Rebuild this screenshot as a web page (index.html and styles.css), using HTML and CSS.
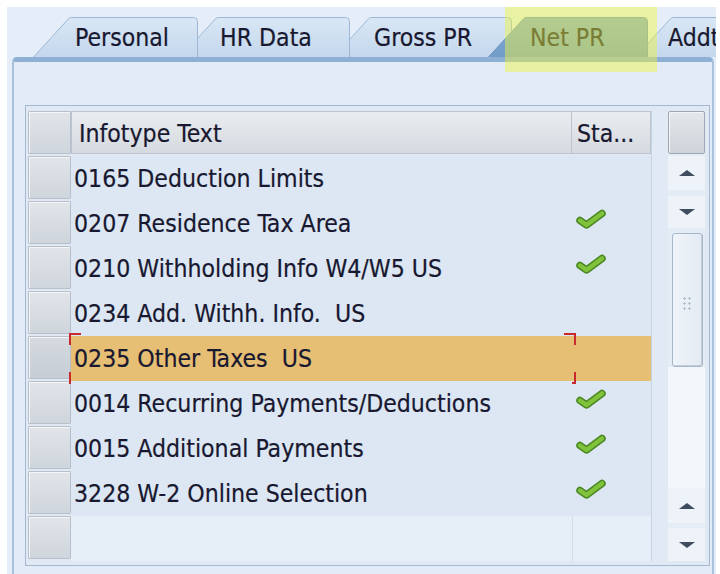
FILE: index.html
```html
<!DOCTYPE html>
<html lang="en">
<head>
<meta charset="utf-8">
<title>Infotypes</title>
<link rel="stylesheet" href="styles.css">
</head>
<body>
<div class="frame">
  <div class="tabs">
    <div class="tab t-personal">
      <svg class="tab-bg" viewBox="0 0 165 40" width="165" height="40"><defs><linearGradient id="g1" x1="0" y1="0" x2="0" y2="1"><stop offset="0" stop-color="#d9e7f5"/><stop offset="1" stop-color="#c4d7ec"/></linearGradient></defs><path d="M0.5 40 L35.5 1.8 Q36.6 0.5 38.5 0.5 L160.5 0.5 Q164.5 0.5 164.5 4.5 L164.5 40" fill="url(#g1)" stroke="#9cb7d6"/></svg>
      <span class="tab-label">Personal</span>
    </div>
    <div class="tab t-hr">
      <svg class="tab-bg" viewBox="0 0 170 40" width="170" height="40"><path d="M0.5 40 L35.5 1.8 Q36.6 0.5 38.5 0.5 L165.5 0.5 Q169.5 0.5 169.5 4.5 L169.5 40" fill="url(#g1)" stroke="#9cb7d6"/></svg>
      <span class="tab-label">HR Data</span>
    </div>
    <div class="tab t-gross">
      <svg class="tab-bg" viewBox="0 0 179 40" width="179" height="40"><path d="M0.5 40 L35.5 1.8 Q36.6 0.5 38.5 0.5 L174.5 0.5 Q178.5 0.5 178.5 4.5 L178.5 40" fill="url(#g1)" stroke="#9cb7d6"/></svg>
      <span class="tab-label">Gross PR</span>
    </div>
    <div class="tab t-net">
      <svg class="tab-bg" viewBox="0 0 160 40" width="160" height="40"><defs><linearGradient id="g2" x1="0" y1="0" x2="0" y2="1"><stop offset="0" stop-color="#84aad3"/><stop offset="1" stop-color="#729cc9"/></linearGradient></defs><path d="M0.5 40 L35.5 1.8 Q36.6 0.5 38.5 0.5 L155.5 0.5 Q159.5 0.5 159.5 4.5 L159.5 40" fill="url(#g2)" stroke="#6f95c2"/></svg>
      <span class="tab-label">Net PR</span>
    </div>
    <div class="tab t-add">
      <svg class="tab-bg" viewBox="0 0 150 40" width="150" height="40"><path d="M0.5 40 L35.5 1.8 Q36.6 0.5 38.5 0.5 L145.5 0.5 Q149.5 0.5 149.5 4.5 L149.5 40" fill="url(#g1)" stroke="#9cb7d6"/></svg>
      <span class="tab-label">Addtl</span>
    </div>
  </div>

  <div class="panel">
    <div class="table">
      <div class="grid">
        <div class="rh"></div>
        <div class="th">Infotype Text</div>
        <div class="th th-st">Sta...</div>

        <div class="rh"></div>
        <div class="cell">0165 Deduction Limits</div>
        <div class="st"></div>

        <div class="rh"></div>
        <div class="cell">0207 Residence Tax Area</div>
        <div class="st"><svg class="check" viewBox="0 0 30 20" width="30" height="20"><path d="M4 11.5 L10.5 16 L26 4.5" fill="none" stroke="#4a8824" stroke-width="7.5" stroke-linecap="round" stroke-linejoin="round"/><path d="M4 11.5 L10.5 16 L26 4.5" fill="none" stroke="#80c23c" stroke-width="4.5" stroke-linecap="round" stroke-linejoin="round"/></svg></div>

        <div class="rh"></div>
        <div class="cell">0210 Withholding Info W4/W5 US</div>
        <div class="st"><svg class="check" viewBox="0 0 30 20" width="30" height="20"><path d="M4 11.5 L10.5 16 L26 4.5" fill="none" stroke="#4a8824" stroke-width="7.5" stroke-linecap="round" stroke-linejoin="round"/><path d="M4 11.5 L10.5 16 L26 4.5" fill="none" stroke="#80c23c" stroke-width="4.5" stroke-linecap="round" stroke-linejoin="round"/></svg></div>

        <div class="rh"></div>
        <div class="cell">0234 Add. Withh. Info.&nbsp; US</div>
        <div class="st"></div>

        <div class="rh rh-sel"></div>
        <div class="cell sel">0235 Other Taxes&nbsp; US<span class="focus"><i class="c tl"></i><i class="c tr"></i><i class="c bl"></i><i class="c br"></i></span></div>
        <div class="st sel"></div>

        <div class="rh"></div>
        <div class="cell">0014 Recurring Payments/Deductions</div>
        <div class="st"><svg class="check" viewBox="0 0 30 20" width="30" height="20"><path d="M4 11.5 L10.5 16 L26 4.5" fill="none" stroke="#4a8824" stroke-width="7.5" stroke-linecap="round" stroke-linejoin="round"/><path d="M4 11.5 L10.5 16 L26 4.5" fill="none" stroke="#80c23c" stroke-width="4.5" stroke-linecap="round" stroke-linejoin="round"/></svg></div>

        <div class="rh"></div>
        <div class="cell">0015 Additional Payments</div>
        <div class="st"><svg class="check" viewBox="0 0 30 20" width="30" height="20"><path d="M4 11.5 L10.5 16 L26 4.5" fill="none" stroke="#4a8824" stroke-width="7.5" stroke-linecap="round" stroke-linejoin="round"/><path d="M4 11.5 L10.5 16 L26 4.5" fill="none" stroke="#80c23c" stroke-width="4.5" stroke-linecap="round" stroke-linejoin="round"/></svg></div>

        <div class="rh"></div>
        <div class="cell">3228 W-2 Online Selection</div>
        <div class="st"><svg class="check" viewBox="0 0 30 20" width="30" height="20"><path d="M4 11.5 L10.5 16 L26 4.5" fill="none" stroke="#4a8824" stroke-width="7.5" stroke-linecap="round" stroke-linejoin="round"/><path d="M4 11.5 L10.5 16 L26 4.5" fill="none" stroke="#80c23c" stroke-width="4.5" stroke-linecap="round" stroke-linejoin="round"/></svg></div>

        <div class="rh"></div>
        <div class="cell empty"></div>
        <div class="st empty"></div>
      </div>

      <div class="gapcol"></div>

      <div class="scroll">
        <div class="sb-corner"></div>
        <div class="sb-btn sb-up1"><span class="arrow-up"></span></div>
        <div class="sb-btn sb-down1"><span class="arrow-down"></span></div>
        <div class="sb-thumb"><span class="grip"></span></div>
        <div class="sb-track"></div>
        <div class="sb-btn sb-up2"><span class="arrow-up"></span></div>
        <div class="sb-btn sb-down2"><span class="arrow-down"></span></div>
      </div>
    </div>
  </div>

  <div class="highlight"></div>
</div>
</body>
</html>
```

FILE: styles.css
```css
* {
  box-sizing: border-box;
}

body {
  margin: 0;
  background: #ffffff;
  font-family: "DejaVu Sans Condensed", "DejaVu Sans", sans-serif;
  font-stretch: condensed;
  font-size: 24.6px;
  color: #181830;
  -webkit-text-stroke: 0.2px #181830;
}

.frame {
  position: relative;
  margin: 7px 0 0 7px;
  width: 709px;
  height: 567px;
  background: #e5eef8;
  overflow: hidden;
}

/* ---------- tabs ---------- */
.tabs {
  display: flex;
  align-items: flex-end;
  height: 50px;
  padding-left: 26px;
  position: relative;
  z-index: 1;
}

.tab {
  position: relative;
  flex: none;
  height: 40px;
  padding: 2px 0 0 42px;
  line-height: 38px;
  white-space: nowrap;
  overflow: hidden;
}

.tab-bg {
  position: absolute;
  left: 0;
  top: 0;
}

.tab-label {
  position: relative;
}

.t-personal { width: 165px; z-index: 5; }
.t-hr { width: 170px; margin-left: -18px; z-index: 4; padding-left: 40px; }
.t-gross { width: 179px; margin-left: -17px; z-index: 3; padding-left: 41px; }
.t-net { width: 160px; margin-left: -24px; z-index: 6; }
.t-add { width: 150px; margin-left: -13px; z-index: 2; padding-left: 33px; }

.highlight {
  position: absolute;
  left: 498px;
  top: 0;
  width: 152px;
  height: 65px;
  background: rgba(238, 244, 60, 0.46);
  z-index: 10;
}

/* ---------- panel ---------- */
.panel {
  margin-left: 5px;
  width: 702px;
  height: 517px;
  border: 2px solid #a9c2de;
  border-top: 5px solid #8fb0d5;
  border-bottom: none;
  border-radius: 5px 5px 0 0;
  background: #e3ecf6;
  padding: 43px 0 0 11px;
}

.table {
  display: flex;
  width: 685px;
  height: 461px;
  border: 1px solid #a2b9d4;
  background: #dfe8f3;
  padding: 5px 4px 4px 2px;
}

.grid {
  display: grid;
  grid-template-columns: 43px 501px 79px;
  grid-auto-rows: 45px;
}

.rh {
  height: 43px;
  background: linear-gradient(#e1e5ea, #cfd5dc);
  border: 1px solid #b7c0ca;
  border-radius: 1px;
  box-shadow: inset 1px 1px 0 #f3f5f7;
}

.rh-sel {
  background: linear-gradient(#d5dae0, #c7cdd5);
}

.th {
  height: 43px;
  background: linear-gradient(#eaedf0, #d5dae0);
  border: 1px solid #bcc5cf;
  padding: 2px 0 0 7px;
  line-height: 39px;
  white-space: nowrap;
}

.th-st {
  border-left: none;
  padding-left: 5px;
}

.cell {
  position: relative;
  background: #dce7f3;
  padding: 1px 0 0 3px;
  line-height: 44px;
  white-space: nowrap;
}

.st {
  background: #dce7f3;
  display: flex;
  align-items: flex-start;
  padding: 8px 0 0 4px;
}

.sel {
  background: #e7bf74;
}

.empty {
  background: #e6eef7;
}

.st.empty {
  border-left: 1px solid #d3dde8;
}

.check {
  display: block;
}

.focus {
  position: absolute;
  left: -2px;
  right: -4px;
  top: -3px;
  bottom: -3px;
}

.c {
  position: absolute;
  width: 12px;
  height: 12px;
  border: 0 solid #c8292c;
}

.tl { left: 0; top: 0; border-left-width: 2px; border-top-width: 2px; }
.tr { right: 0; top: 0; border-right-width: 2px; border-top-width: 2px; }
.bl { left: 0; bottom: 0; border-left-width: 2px; border-bottom-width: 2px; }
.br { right: 0; bottom: 0; border-right-width: 2px; border-bottom-width: 2px; }

/* ---------- gap & scrollbar ---------- */
.gapcol {
  width: 17px;
  border-left: 1px solid #c5d3e3;
  background: #e0e9f4;
}

.scroll {
  width: 37px;
  display: flex;
  flex-direction: column;
  background: #e4ecf6;
}

.sb-corner {
  height: 43px;
  margin-bottom: 2px;
  background: linear-gradient(#e4e7eb, #cfd4da);
  border: 1px solid #9ea8b4;
  border-radius: 2px;
  box-shadow: inset 1px 1px 0 #f4f5f7;
}

.sb-btn {
  display: flex;
  align-items: center;
  justify-content: center;
  background: #eef3f9;
}

.sb-up1 { height: 34px; }
.sb-down1 { height: 32px; margin-top: 6px; }
.sb-up2 { height: 35px; }
.sb-down2 { height: 33px; margin-top: 5px; }

.arrow-up {
  width: 0;
  height: 0;
  border-left: 8px solid transparent;
  border-right: 8px solid transparent;
  border-bottom: 6px solid #3e4c5d;
}

.arrow-down {
  width: 0;
  height: 0;
  border-left: 8px solid transparent;
  border-right: 8px solid transparent;
  border-top: 6px solid #3e4c5d;
}

.sb-thumb {
  height: 134px;
  margin: 5px 2px 0 4px;
  background: linear-gradient(90deg, #eff4f9, #e3eaf3);
  border: 1px solid #a7b7c9;
  border-radius: 3px;
  box-shadow: inset -1px -1px 0 #c3cedb;
  display: flex;
  align-items: center;
  justify-content: center;
}

.grip {
  width: 9px;
  height: 13px;
  margin-top: 6px;
  background-image: radial-gradient(circle, #b5c0cd 1px, transparent 1.4px);
  background-size: 5px 5px;
  background-position: -1px -1px;
}

.sb-track {
  flex: 1;
  background: #f3f6fa;
}
```
